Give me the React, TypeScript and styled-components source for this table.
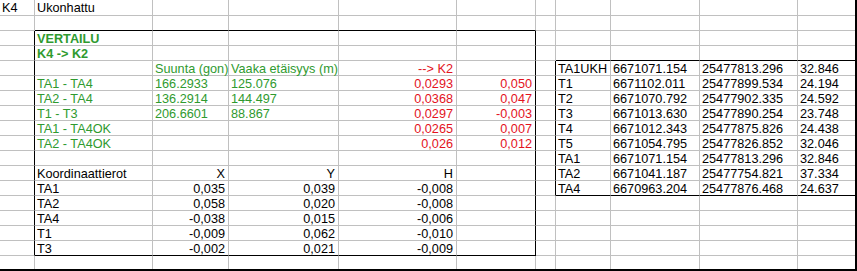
import React from "react";
import styled, { createGlobalStyle } from "styled-components";

const GlobalStyle = createGlobalStyle`
  html, body { margin: 0; padding: 0; background: #ffffff; }
  body { font-family: "Liberation Sans", Arial, sans-serif; }
`;

const GREEN = "#2f9a2f";
const RED = "#e3131d";
const GRID = "#c0c0c0";
const INK = "#000000";

const COLS = [35, 118, 76, 110, 118, 79, 20, 55, 89, 98, 57];
const ROW_COUNT = 18;

const Frame = styled.div`
  width: 857px;
  height: 271px;
  box-sizing: border-box;
  border-right: 2px solid ${INK};
  border-bottom: 2px solid ${INK};
  overflow: hidden;
  background: #ffffff;
`;

const Sheet = styled.div`
  display: grid;
  grid-template-columns: ${COLS.map((w) => `${w}px`).join(" ")};
  grid-template-rows: 16px repeat(16, 15px) 13px;
`;

type Tone = "ink" | "green" | "red";

const toneColor: Record<Tone, string> = { ink: INK, green: GREEN, red: RED };

const Cell = styled.div<{
  $right: boolean;
  $tone: Tone;
  $bold: boolean;
  $rb: "none" | "grid" | "box";
  $bb: "none" | "grid" | "box";
}>`
  box-sizing: border-box;
  min-width: 0;
  border-right: ${(p) =>
    p.$rb === "none" ? "0" : `1px solid ${p.$rb === "box" ? INK : GRID}`};
  border-bottom: ${(p) =>
    p.$bb === "none" ? "0" : `1px solid ${p.$bb === "box" ? INK : GRID}`};
  padding: 1px ${(p) => (p.$right ? "3px" : "0")} 0 ${(p) => (p.$right ? "0" : "2px")};
  font-size: 12.7px;
  line-height: 14px;
  white-space: nowrap;
  text-align: ${(p) => (p.$right ? "right" : "left")};
  color: ${(p) => toneColor[p.$tone]};
  font-weight: ${(p) => (p.$bold ? 700 : 400)};
`;

type Def = { t: string; r?: boolean; tone?: Tone; b?: boolean };
type RowDef = Record<number, Def>;

const g = (t: string, extra: Partial<Def> = {}): Def => ({ t, tone: "green", ...extra });
const rd = (t: string): Def => ({ t, tone: "red", r: true });
const k = (t: string): Def => ({ t });
const kr = (t: string): Def => ({ t, r: true });

const coords: [string, string, string, string][] = [
  ["TA1UKH", "6671071.154", "25477813.296", "32.846"],
  ["T1", "6671102.011", "25477899.534", "24.194"],
  ["T2", "6671070.792", "25477902.335", "24.592"],
  ["T3", "6671013.630", "25477890.254", "23.748"],
  ["T4", "6671012.343", "25477875.826", "24.438"],
  ["T5", "6671054.795", "25477826.852", "32.046"],
  ["TA1", "6671071.154", "25477813.296", "32.846"],
  ["TA2", "6671041.187", "25477754.821", "37.334"],
  ["TA4", "6670963.204", "25477876.468", "24.637"],
];

const rows: RowDef[] = [
  { 0: k("K4"), 1: k("Ukonhattu") },
  {},
  { 1: g("VERTAILU", { b: true }) },
  { 1: g("K4 -> K2", { b: true }) },
  { 2: g("Suunta (gon)"), 3: g("Vaaka etäisyys (m)"), 4: rd("--> K2") },
  { 1: g("TA1 - TA4"), 2: g("166.2933"), 3: g("125.076"), 4: rd("0,0293"), 5: rd("0,050") },
  { 1: g("TA2 - TA4"), 2: g("136.2914"), 3: g("144.497"), 4: rd("0,0368"), 5: rd("0,047") },
  { 1: g("T1 - T3"), 2: g("206.6601"), 3: g("88.867"), 4: rd("0,0297"), 5: rd("-0,003") },
  { 1: g("TA1 - TA4OK"), 4: rd("0,0265"), 5: rd("0,007") },
  { 1: g("TA2 - TA4OK"), 4: rd("0,026"), 5: rd("0,012") },
  {},
  { 1: k("Koordinaattierot"), 2: kr("X"), 3: kr("Y"), 4: kr("H") },
  { 1: k("TA1"), 2: kr("0,035"), 3: kr("0,039"), 4: kr("-0,008") },
  { 1: k("TA2"), 2: kr("0,058"), 3: kr("0,020"), 4: kr("-0,008") },
  { 1: k("TA4"), 2: kr("-0,038"), 3: kr("0,015"), 4: kr("-0,006") },
  { 1: k("T1"), 2: kr("-0,009"), 3: kr("0,062"), 4: kr("-0,010") },
  { 1: k("T3"), 2: kr("-0,002"), 3: kr("0,021"), 4: kr("-0,009") },
  {},
];

coords.forEach((c, i) => {
  const row = rows[4 + i];
  row[7] = k(c[0]);
  row[8] = k(c[1]);
  row[9] = k(c[2]);
  row[10] = k(c[3]);
});

const inRange = (v: number, a: number, b: number) => v >= a && v <= b;

const rightBorder = (r: number, c: number): "none" | "grid" | "box" => {
  if (c === COLS.length - 1) return "none";
  if ((c === 0 || c === 5) && inRange(r, 2, 16)) return "box";
  if (c === 6 && inRange(r, 4, 12)) return "box";
  return "grid";
};

const bottomBorder = (r: number, c: number): "none" | "grid" | "box" => {
  if (r === ROW_COUNT - 1) return "none";
  if ((r === 1 || r === 16) && inRange(c, 1, 5)) return "box";
  if ((r === 3 || r === 12) && inRange(c, 7, 10)) return "box";
  return "grid";
};

export default function App() {
  return (
    <>
      <GlobalStyle />
      <Frame>
        <Sheet>
          {rows.map((row, r) =>
            COLS.map((_, c) => {
              const d = row[c];
              return (
                <Cell
                  key={`${r}-${c}`}
                  $right={!!d?.r}
                  $tone={d?.tone ?? "ink"}
                  $bold={!!d?.b}
                  $rb={rightBorder(r, c)}
                  $bb={bottomBorder(r, c)}
                >
                  {d?.t ?? ""}
                </Cell>
              );
            })
          )}
        </Sheet>
      </Frame>
    </>
  );
}
